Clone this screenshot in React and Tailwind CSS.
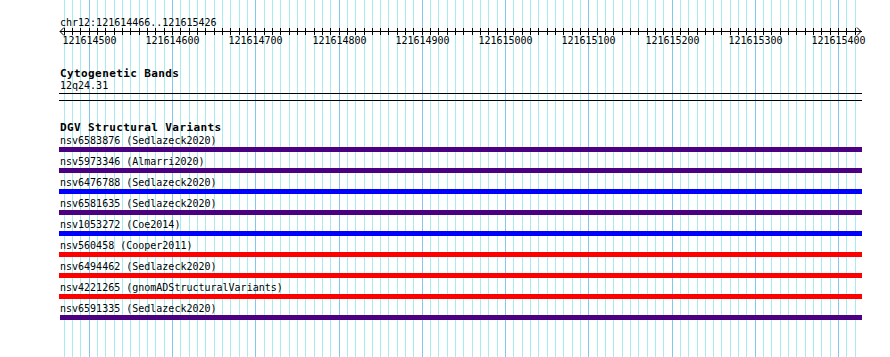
import React from 'react';

const START = 121614466;
const END = 121615426;
const SCALE = 800 / (END - START + 1);

const toPx = (bp) => Math.round(60.5 + (bp - START) * SCALE);

const guides = [];
for (let bp = 121614470; bp <= 121615420; bp += 10) guides.push(bp);

const labels = [];
for (let bp = 121614500; bp <= 121615400; bp += 100) labels.push(bp);

const variants = [
  { name: 'nsv6583876 (Sedlazeck2020)', color: 'bg-[#4b0082]' },
  { name: 'nsv5973346 (Almarri2020)', color: 'bg-[#4b0082]' },
  { name: 'nsv6476788 (Sedlazeck2020)', color: 'bg-[#0000ff]' },
  { name: 'nsv6581635 (Sedlazeck2020)', color: 'bg-[#4b0082]' },
  { name: 'nsv1053272 (Coe2014)', color: 'bg-[#0000ff]' },
  { name: 'nsv560458 (Cooper2011)', color: 'bg-[#ff0000]' },
  { name: 'nsv6494462 (Sedlazeck2020)', color: 'bg-[#ff0000]' },
  { name: 'nsv4221265 (gnomADStructuralVariants)', color: 'bg-[#ff0000]' },
  { name: 'nsv6591335 (Sedlazeck2020)', color: 'bg-[#4b0082] ml-[1px] w-[802px]' },
];

const mono = "font-['DejaVu_Sans_Mono','Liberation_Mono',monospace]";

const App = () => {
  return (
    <div className={`relative w-[890px] h-[357px] bg-white overflow-hidden text-black text-[10px] ${mono}`}>
      {/* base position guidelines */}
      <svg className="absolute inset-0" width="890" height="357">
        {guides.map((bp) => (
          <rect
            key={bp}
            x={toPx(bp)}
            y="0"
            width="1"
            height="357"
            fill={bp % 100 === 0 ? '#80c8ee' : '#a8ecf0'}
          />
        ))}
      </svg>

      <div className="relative">
        <div className="h-[26px] pt-[17px] pl-[60px] leading-[11px]">chr12:121614466..121615426</div>

        {/* ruler */}
        <svg className="block" width="890" height="20">
          <rect x="60" y="5" width="802" height="1" fill="#000" />
          {guides.map((bp) => (
            <rect key={bp} x={toPx(bp)} y="2" width="1" height="7" fill="#000" />
          ))}
          <path d="M64 1.5 L60 5.5 L64 9.5" fill="none" stroke="#000" strokeWidth="1" />
          <path d="M857 1.5 L861 5.5 L857 9.5" fill="none" stroke="#000" strokeWidth="1" />
          {labels.map((bp) => (
            <text
              key={bp}
              x={toPx(bp) + 0.5}
              y="18"
              textAnchor="middle"
              fontSize="10"
              fontFamily="'DejaVu Sans Mono', 'Liberation Mono', monospace"
              fill="#000"
            >
              {bp}
            </text>
          ))}
        </svg>

        <div className="pl-[59px] mt-[22px]">
          <div className="w-[803px]">
            {/* Cytogenetic Bands */}
            <div className="pl-[1px] text-[11px] font-bold leading-[12px] tracking-[0.4px]">Cytogenetic Bands</div>
            <div className="pl-[1px] leading-[12px]">12q24.31</div>
            <div className="mt-[1px] h-[1px] bg-black" />
            <div className="mt-[6px] h-[1px] bg-black" />

            {/* DGV Structural Variants */}
            <div className="mt-[21px] pl-[1px] text-[11px] font-bold leading-[12px] tracking-[0.4px]">
              DGV Structural Variants
            </div>
            <div className="flex flex-col">
              {variants.map((v) => (
                <div key={v.name} className="flex flex-col mb-[3px]">
                  <div className="pl-[1px] leading-[13px] whitespace-pre">{v.name}</div>
                  <div className={`h-[5px] ${v.color.includes('w-') ? '' : 'w-full'} ${v.color}`} />
                </div>
              ))}
            </div>
          </div>
        </div>
      </div>
    </div>
  );
};

export default App;
